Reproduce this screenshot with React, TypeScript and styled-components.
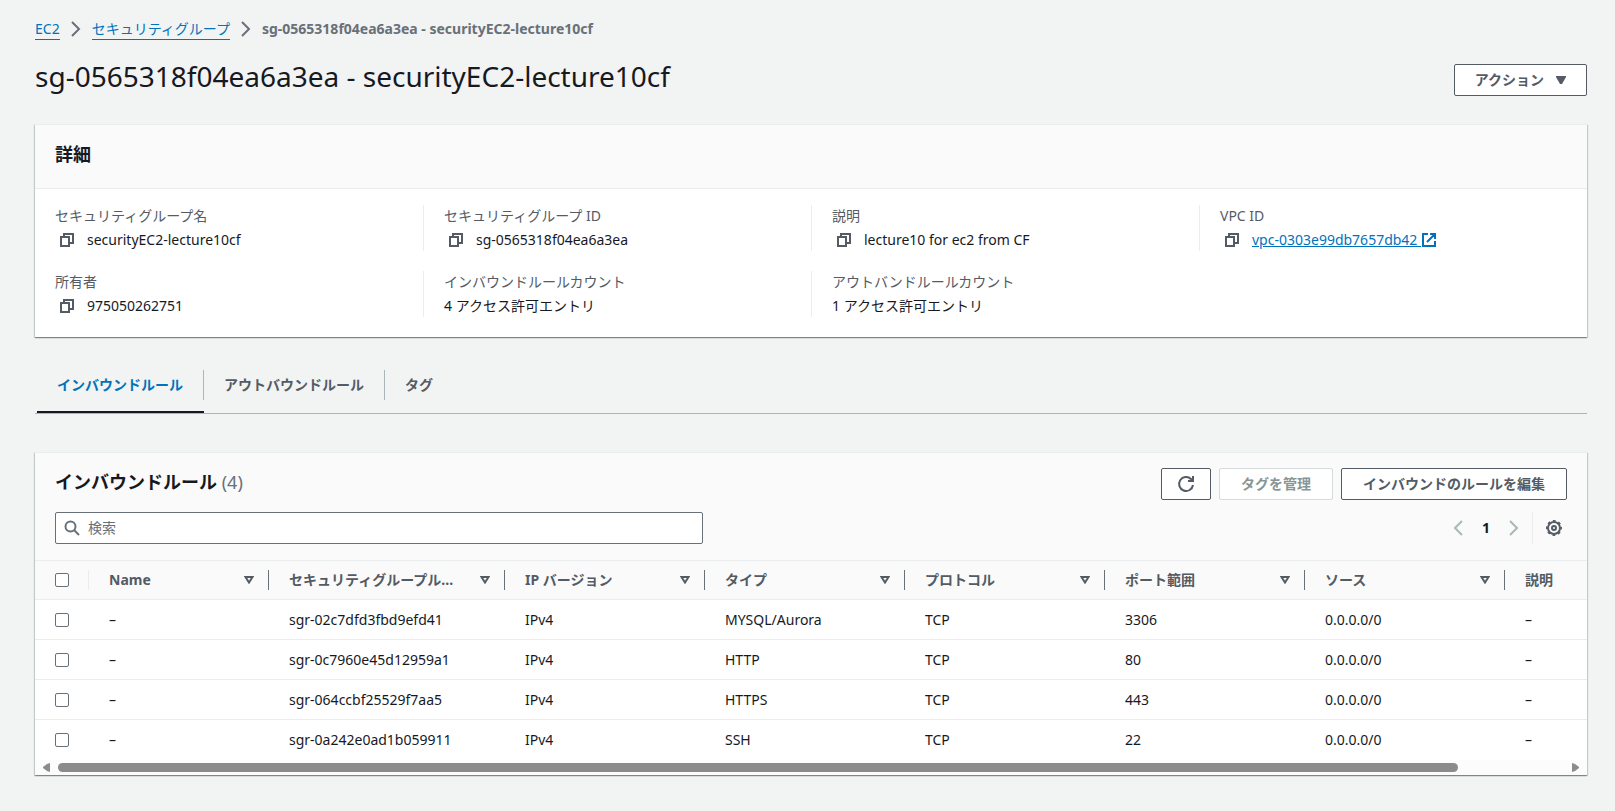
import React, { useEffect, useRef, useState } from "react";
import styled, { createGlobalStyle, css } from "styled-components";

const c = {
  page: "#f2f3f3",
  header: "#fafafa",
  line: "#eaeded",
  tabLine: "#aab7b8",
  text: "#16191f",
  muted: "#545b64",
  grey: "#687078",
  link: "#0073bb",
};

const GlobalStyle = createGlobalStyle`
  *, *::before, *::after { box-sizing: border-box; }
  body {
    margin: 0;
    background: ${c.page};
    color: ${c.text};
    font: 14px/22px "Noto Sans", "Noto Sans CJK JP", sans-serif;
  }
  button, input { font: inherit; }
  h1, h2, dl, dd, ol { margin: 0; padding: 0; }
`;

const Page = styled.main`
  padding: 18px 28px 35px 35px;
`;

const Breadcrumbs = styled.ol`
  display: flex;
  align-items: center;
  gap: 11px;
  list-style: none;
`;

const Crumb = styled.li`
  display: flex;
  align-items: center;
  gap: 11px;
  color: ${c.grey};
  font-weight: 700;
`;

const CrumbLink = styled.a`
  color: ${c.link};
  font-weight: 400;
  line-height: 20px;
  text-decoration: none;
  border-bottom: 1px solid ${c.link};
`;

const TitleRow = styled.header`
  display: flex;
  justify-content: space-between;
  align-items: flex-start;
  padding: 18px 0 28px;
`;

const PageTitle = styled.h1`
  font-size: 28px;
  line-height: 36px;
  font-weight: 400;
`;

const Button = styled.button`
  display: inline-flex;
  align-items: center;
  justify-content: center;
  height: 32px;
  padding: 0 21px;
  border: 1px solid ${c.muted};
  border-radius: 2px;
  background: #fff;
  color: ${c.muted};
  font-weight: 700;
  white-space: nowrap;
  &:disabled {
    border-color: #d5dbdb;
    color: #879596;
  }
`;

const RefreshButton = styled(Button)`
  width: 50px;
  padding: 0;
`;

const TitleButton = styled(Button)`
  gap: 12px;
  margin-top: 6px;
  padding: 0 20px;
`;

const Card = styled.section`
  background: #fff;
  border-top: 1px solid ${c.line};
  box-shadow:
    0 1px 1px 0 rgba(0, 28, 36, 0.3),
    1px 1px 1px 0 rgba(0, 28, 36, 0.15),
    -1px 1px 1px 0 rgba(0, 28, 36, 0.15);
`;

const CardHeader = styled.div`
  padding: 18px 20px 23px;
  background: ${c.header};
  border-bottom: 1px solid ${c.line};
`;

const CardTitle = styled.h2`
  font-size: 18px;
  line-height: 22px;
  font-weight: 700;
`;

const Count = styled.span`
  color: ${c.grey};
  font-weight: 400;
`;

const Details = styled.dl`
  display: grid;
  grid-template-columns: repeat(4, 1fr);
  row-gap: 20px;
  padding: 16px 0 20px;
`;

const Detail = styled.div<{ $divided: boolean }>`
  display: grid;
  row-gap: 2px;
  padding: 0 20px;
  border-left: ${(p) => (p.$divided ? `1px solid ${c.line}` : "0")};
`;

const DetailLabel = styled.dt`
  color: ${c.muted};
`;

const DetailValue = styled.dd`
  display: flex;
  align-items: center;
`;

const IconButton = styled.button`
  display: inline-flex;
  align-items: center;
  justify-content: center;
  padding: 0;
  border: 0;
  background: none;
  color: ${c.muted};
`;

const CopyButton = styled(IconButton)`
  width: 24px;
  height: 22px;
  margin-right: 8px;
`;

const ExternalLink = styled.a`
  display: inline-flex;
  align-items: center;
  gap: 1px;
  color: ${c.link};
  white-space: pre;
`;

const Tabs = styled.div`
  display: flex;
  margin-top: 33px;
  padding-left: 2px;
  border-bottom: 1px solid ${c.tabLine};
`;

const Tab = styled.button<{ $active: boolean }>`
  display: flex;
  padding: 0 0 11px;
  border: 0;
  border-bottom: 2px solid ${(p) => (p.$active ? c.text : "transparent")};
  background: none;
  color: ${(p) => (p.$active ? c.link : c.muted)};
  font-weight: 700;
`;

const TabLabel = styled.span<{ $last: boolean }>`
  padding: 4px 20px;
  border-right: 1px solid ${(p) => (p.$last ? "transparent" : c.tabLine)};
`;

const RulesCard = styled(Card)`
  margin-top: 38px;
`;

const RulesHeader = styled.div`
  padding: 15px 20px 16px;
  background: ${c.header};
`;

const HeaderRow = styled.div`
  display: flex;
  justify-content: space-between;
  & + & {
    margin-top: 12px;
  }
`;

const RulesTitle = styled(CardTitle)`
  padding-top: 3px;
`;

const Actions = styled.div`
  display: flex;
  gap: 8px;
`;

const Search = styled.label`
  display: flex;
  align-items: center;
  gap: 8px;
  flex: 0 1 648px;
  height: 32px;
  padding: 0 8px;
  border: 1px solid ${c.grey};
  border-radius: 2px;
  background: #fff;
  color: ${c.grey};
`;

const SearchInput = styled.input`
  flex: 1;
  min-width: 0;
  padding: 0;
  border: 0;
  outline: 0;
  background: none;
  color: ${c.text};
  &::placeholder {
    color: ${c.grey};
    opacity: 1;
  }
`;

const Pager = styled.nav`
  display: flex;
  align-items: center;
`;

const PageArrow = styled(IconButton)`
  width: 16px;
  height: 22px;
  color: #aab7b8;
`;

const PageNumber = styled(IconButton)`
  width: 40px;
  height: 22px;
  color: ${c.text};
  font-weight: 700;
`;

const Settings = styled.div`
  display: flex;
  height: 32px;
  margin-left: 10px;
  padding: 0 5px 0 13px;
  border-left: 1px solid ${c.line};
`;

const Scroller = styled.div`
  overflow-x: auto;
  scrollbar-width: none;
`;

const Table = styled.table`
  width: 100%;
  min-width: 1670px;
  table-layout: fixed;
  border-collapse: separate;
  border-spacing: 0;
  text-align: left;
`;

const Col = styled.col<{ $width?: number }>`
  ${(p) => p.$width && css`width: ${p.$width}px;`}
`;

const HeadCell = styled.th`
  height: 40px;
  padding: 0;
  border-top: 1px solid ${c.line};
  border-bottom: 1px solid ${c.line};
  background: ${c.header};
  color: ${c.muted};
  font-weight: 700;
`;

const HeadInner = styled.div<{ $light?: boolean }>`
  display: flex;
  align-items: center;
  justify-content: space-between;
  height: 20px;
  padding: 0 14px 0 20px;
  border-right: 1px solid ${(p) => (p.$light ? c.line : c.grey)};
  white-space: nowrap;
`;

const Row = styled.tr`
  &:last-child > td {
    border-bottom-color: transparent;
  }
`;

const Cell = styled.td`
  height: 40px;
  padding: 0 20px;
  border-bottom: 1px solid ${c.line};
  white-space: nowrap;
`;

const Checkbox = styled.input.attrs({ type: "checkbox" })`
  display: block;
  appearance: none;
  width: 14px;
  height: 14px;
  margin: 0;
  border: 1px solid ${c.grey};
  border-radius: 2px;
  background: #fff;
  &:checked {
    background: ${c.link};
  }
`;

const ScrollBar = styled.div`
  display: flex;
  align-items: center;
  gap: 8px;
  height: 15px;
  padding: 0 8px;
  background: #fcfcfc;
`;

const ScrollArrow = styled(IconButton)`
  width: 7px;
  color: #8b8b8b;
`;

const Track = styled.div`
  flex: 1;
`;

const Thumb = styled.div`
  height: 9px;
  border-radius: 5px;
  background: #8b8b8b;
`;

const Chevron = ({ left }: { left?: boolean }) => (
  <svg width="10" height="16" viewBox="0 0 10 16" fill="none" stroke="currentColor" strokeWidth="2" aria-hidden="true">
    <path d={left ? "M9 1 2 8l7 7" : "m1 1 7 7-7 7"} />
  </svg>
);

const CopyIcon = () => (
  <svg width="14" height="14" viewBox="0 0 14 14" fill="none" stroke="currentColor" strokeWidth="2" aria-hidden="true">
    <path d="M1 4h8v9H1z M4 4V1h9v9H9" />
  </svg>
);

const ExternalIcon = () => (
  <svg width="14" height="14" viewBox="0 0 14 14" fill="none" stroke="currentColor" strokeWidth="2" aria-hidden="true">
    <path d="M6 1H1v12h12V8 M8 1h5v5 M13 1 5 9" />
  </svg>
);

const SearchIcon = () => (
  <svg width="16" height="16" viewBox="0 0 16 16" fill="none" stroke="currentColor" strokeWidth="2" aria-hidden="true">
    <circle cx="6.5" cy="6.5" r="5" />
    <path d="m10 10 5 5" />
  </svg>
);

const RefreshIcon = () => (
  <svg width="18" height="18" viewBox="0 0 18 18" fill="none" stroke="currentColor" strokeWidth="2" aria-hidden="true">
    <path d="M16 10a7 7 0 1 1-2-6l2 2 M16 1v5h-5" />
  </svg>
);

const GearIcon = () => (
  <svg width="16" height="16" viewBox="0 0 16 16" fill="none" stroke="currentColor" aria-hidden="true">
    <circle cx="8" cy="8" r="6" strokeWidth="2" />
    <circle cx="8" cy="8" r="7.2" strokeWidth="1.6" strokeDasharray="2.83 2.83" strokeDashoffset="1.41" />
    <circle cx="8" cy="8" r="2" strokeWidth="2" />
  </svg>
);

const CaretIcon = () => (
  <svg width="10" height="8" viewBox="0 0 10 8" fill="currentColor" aria-hidden="true">
    <path d="M0 0h10v1L6 8H4L0 1z" />
  </svg>
);

const SortIcon = () => (
  <svg width="10" height="8" viewBox="0 0 10 8" fill="none" stroke="currentColor" strokeWidth="2" aria-hidden="true">
    <path d="M1.5 1h7L5 6.5z" />
  </svg>
);

const ArrowIcon = ({ left }: { left?: boolean }) => (
  <svg width="7" height="9" viewBox="0 0 7 9" fill="currentColor" aria-hidden="true">
    <path d={left ? "M7 0v9L4 8 0 5V4l4-3z" : "M0 0v9l3-1 4-3V4L3 1z"} />
  </svg>
);

type DetailItem = { label: string; value: string; copy?: boolean; href?: string };

const details: DetailItem[] = [
  { label: "セキュリティグループ名", value: "securityEC2-lecture10cf", copy: true },
  { label: "セキュリティグループ ID", value: "sg-0565318f04ea6a3ea", copy: true },
  { label: "説明", value: "lecture10 for ec2 from CF", copy: true },
  { label: "VPC ID", value: "vpc-0303e99db7657db42", copy: true, href: "#vpc" },
  { label: "所有者", value: "975050262751", copy: true },
  { label: "インバウンドルールカウント", value: "4 アクセス許可エントリ" },
  { label: "アウトバンドルールカウント", value: "1 アクセス許可エントリ" },
];

const tabs = ["インバウンドルール", "アウトバウンドルール", "タグ"];

const columns = [
  { label: "Name", width: 180 },
  { label: "セキュリティグループル...", width: 236 },
  { label: "IP バージョン", width: 200 },
  { label: "タイプ", width: 200 },
  { label: "プロトコル", width: 200 },
  { label: "ポート範囲", width: 200 },
  { label: "ソース", width: 200 },
  { label: "説明" },
];

const rules = [
  ["–", "sgr-02c7dfd3fbd9efd41", "IPv4", "MYSQL/Aurora", "TCP", "3306", "0.0.0.0/0", "–"],
  ["–", "sgr-0c7960e45d12959a1", "IPv4", "HTTP", "TCP", "80", "0.0.0.0/0", "–"],
  ["–", "sgr-064ccbf25529f7aa5", "IPv4", "HTTPS", "TCP", "443", "0.0.0.0/0", "–"],
  ["–", "sgr-0a242e0ad1b059911", "IPv4", "SSH", "TCP", "22", "0.0.0.0/0", "–"],
];

function RulesTable() {
  const scroller = useRef<HTMLDivElement>(null);
  const [bar, setBar] = useState({ size: 100, offset: 0 });

  const measure = () => {
    const el = scroller.current;
    if (!el) return;
    setBar({
      size: (el.clientWidth / el.scrollWidth) * 100,
      offset: (el.scrollLeft / el.scrollWidth) * 100,
    });
  };

  useEffect(() => {
    measure();
    window.addEventListener("resize", measure);
    return () => window.removeEventListener("resize", measure);
  }, []);

  const scroll = (left: number) => scroller.current?.scrollBy({ left });

  return (
    <>
      <Scroller ref={scroller} onScroll={measure}>
        <Table>
          <colgroup>
            <Col $width={54} />
            {columns.map((col) => (
              <Col key={col.label} $width={col.width} />
            ))}
          </colgroup>
          <thead>
            <tr>
              <HeadCell scope="col">
                <HeadInner $light>
                  <Checkbox aria-label="すべて選択" />
                </HeadInner>
              </HeadCell>
              {columns.map((col) => (
                <HeadCell key={col.label} scope="col">
                  <HeadInner>
                    <span>{col.label}</span>
                    <SortIcon />
                  </HeadInner>
                </HeadCell>
              ))}
            </tr>
          </thead>
          <tbody>
            {rules.map((rule) => (
              <Row key={rule[1]}>
                <Cell>
                  <Checkbox aria-label={rule[1]} />
                </Cell>
                {rule.map((value, i) => (
                  <Cell key={i}>{value}</Cell>
                ))}
              </Row>
            ))}
          </tbody>
        </Table>
      </Scroller>
      <ScrollBar>
        <ScrollArrow aria-label="左へ" onClick={() => scroll(-40)}>
          <ArrowIcon left />
        </ScrollArrow>
        <Track>
          <Thumb style={{ width: `${bar.size}%`, marginLeft: `${bar.offset}%` }} />
        </Track>
        <ScrollArrow aria-label="右へ" onClick={() => scroll(40)}>
          <ArrowIcon />
        </ScrollArrow>
      </ScrollBar>
    </>
  );
}

export default function App() {
  const [active, setActive] = useState(0);

  return (
    <>
      <GlobalStyle />
      <Page>
        <nav aria-label="パンくずリスト">
          <Breadcrumbs>
            <Crumb>
              <CrumbLink href="#ec2">EC2</CrumbLink>
              <Chevron />
            </Crumb>
            <Crumb>
              <CrumbLink href="#groups">セキュリティグループ</CrumbLink>
              <Chevron />
            </Crumb>
            <Crumb>sg-0565318f04ea6a3ea - securityEC2-lecture10cf</Crumb>
          </Breadcrumbs>
        </nav>

        <TitleRow>
          <PageTitle>sg-0565318f04ea6a3ea - securityEC2-lecture10cf</PageTitle>
          <TitleButton>
            アクション
            <CaretIcon />
          </TitleButton>
        </TitleRow>

        <Card>
          <CardHeader>
            <CardTitle>詳細</CardTitle>
          </CardHeader>
          <Details>
            {details.map((item, i) => (
              <Detail key={item.label} $divided={i % 4 !== 0}>
                <DetailLabel>{item.label}</DetailLabel>
                <DetailValue>
                  {item.copy && (
                    <CopyButton aria-label="コピー">
                      <CopyIcon />
                    </CopyButton>
                  )}
                  {item.href ? (
                    <ExternalLink href={item.href}>
                      {item.value + " "}
                      <ExternalIcon />
                    </ExternalLink>
                  ) : (
                    item.value
                  )}
                </DetailValue>
              </Detail>
            ))}
          </Details>
        </Card>

        <Tabs role="tablist">
          {tabs.map((tab, i) => (
            <Tab key={tab} role="tab" aria-selected={i === active} $active={i === active} onClick={() => setActive(i)}>
              <TabLabel $last={i === tabs.length - 1}>{tab}</TabLabel>
            </Tab>
          ))}
        </Tabs>

        <RulesCard>
          <RulesHeader>
            <HeaderRow>
              <RulesTitle>
                インバウンドルール <Count>(4)</Count>
              </RulesTitle>
              <Actions>
                <RefreshButton aria-label="更新">
                  <RefreshIcon />
                </RefreshButton>
                <Button disabled>タグを管理</Button>
                <Button>インバウンドのルールを編集</Button>
              </Actions>
            </HeaderRow>
            <HeaderRow>
              <Search>
                <SearchIcon />
                <SearchInput type="text" placeholder="検索" aria-label="検索" />
              </Search>
              <Pager aria-label="ページ">
                <PageArrow aria-label="前へ">
                  <Chevron left />
                </PageArrow>
                <PageNumber>1</PageNumber>
                <PageArrow aria-label="次へ">
                  <Chevron />
                </PageArrow>
                <Settings>
                  <IconButton aria-label="設定">
                    <GearIcon />
                  </IconButton>
                </Settings>
              </Pager>
            </HeaderRow>
          </RulesHeader>
          <RulesTable />
        </RulesCard>
      </Page>
    </>
  );
}
